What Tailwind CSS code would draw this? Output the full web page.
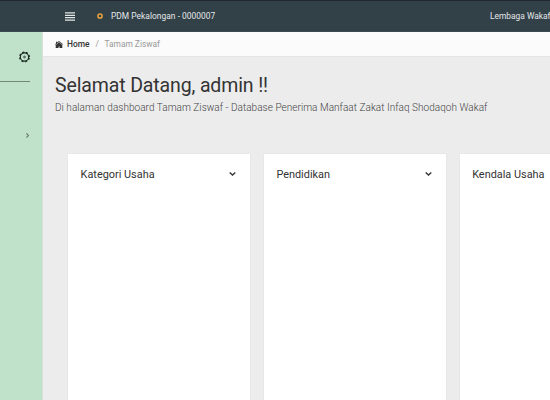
<!DOCTYPE html>
<html lang="id">
<head>
<meta charset="utf-8">
<title>Tamam Ziswaf</title>
<script src="https://cdn.jsdelivr.net/npm/@tailwindcss/browser@4"></script>
</head>
<body class="w-[550px] h-[400px] overflow-hidden flex flex-col bg-[#ececec] font-['Roboto',sans-serif] text-[#333]">
<header class="h-8 shrink-0 flex items-center bg-[#324148] border-t border-t-[#20272d] border-b border-b-[#3c4b52] text-[#e4e7e8] text-[8.4px] whitespace-nowrap overflow-hidden">
  <svg class="ml-[65px] w-[10px] h-[9px] shrink-0" viewBox="0 0 10 9" fill="none" stroke="#e4e7e8" stroke-width="1.3"><path d="M0 .9h10M0 3.3h10M0 5.7h10M0 8.1h10"/></svg>
  <svg class="ml-[22px] w-[6px] h-[6px] shrink-0" viewBox="0 0 6 6" fill="none" stroke="#e8a33d" stroke-width="1.5"><circle cx="3" cy="3" r="2.1"/></svg>
  <span class="ml-2 w-[379px] shrink-0 tracking-[0.04px]">PDM Pekalongan - 0000007</span>
  <span class="shrink-0">Lembaga Wakaf</span>
</header>
<div class="flex flex-1 min-h-0">
  <aside class="w-[43px] shrink-0 bg-[#c0e1ca] border-r border-[#d9dfda] flex flex-col">
    <svg class="mt-[19px] ml-[19px] w-[11px] h-[12px] shrink-0" viewBox="0.4 0.4 11.2 11.2" fill="none" stroke="#18251d"><circle cx="6" cy="6" r="4.2" stroke-width="1.1"/><circle cx="6" cy="6" r="5" stroke-width="1.1" stroke-dasharray="2.2 1.727" stroke-dashoffset="-.86"/><circle cx="6" cy="6" r=".9" stroke-width=".8"/></svg>
    <div class="mt-[18px] w-[30px] h-px bg-[#718878] shrink-0"></div>
    <svg class="mt-[51px] ml-[26px] w-[3px] h-[5px] shrink-0" viewBox="0 0 3 5" fill="none" stroke="#66796d" stroke-width="1.1"><path d="M.4.4 2.5 2.5.4 4.6"/></svg>
  </aside>
  <main class="flex-1 min-w-0 flex flex-col whitespace-nowrap">
    <nav class="h-[25px] shrink-0 bg-[#fbfbfb] border-b border-[#e5e5e5] flex items-center pl-3 text-[8.4px] text-[#999]">
      <svg class="w-[8px] h-[7px]" viewBox="0 0 8 7" fill="#333"><path d="M4 0 8 3.2 7.5 3.8 4 1.1.5 3.8 0 3.2 1 2.4V.7h1v.9ZM4 1.5l3.3 2.6V7H4.5V5.5H3.5V7H.7V4.1Z"/></svg>
      <span class="ml-1 text-[#333] font-medium">Home</span>
      <span class="mx-[6px]">/</span>
      <span class="-ml-[0.5px]">Tamam Ziswaf</span>
    </nav>
    <h1 class="mt-[16px] ml-3 text-[19.5px] tracking-[-0.13px] leading-[25px]">Selamat Datang, admin !!</h1>
    <p class="ml-3 mt-[3px] text-[10px] leading-[14px] tracking-[0.04px] font-light text-[#444]">Di halaman dashboard Tamam Ziswaf - Database Penerima Manfaat Zakat Infaq Shodaqoh Wakaf</p>
    <div class="mt-[38.5px] ml-[25px] flex flex-1 gap-[13.4px]">
      <section class="w-[182.4px] shrink-0 bg-white shadow-[0_0_1px_#ccc] pl-[12.6px] pr-[13px] pt-[14.5px]">
        <div class="flex items-center justify-between h-[14px]"><h2 class="text-[10.9px]">Kategori Usaha</h2><svg class="w-[7px] h-[4px] mr-[1px] -mt-[2px]" viewBox="0 0 7 4" fill="none" stroke="#333" stroke-width="1.3"><path d="M.7.5 3.5 3.1 6.3.5"/></svg></div>
      </section>
      <section class="w-[182.4px] shrink-0 bg-white shadow-[0_0_1px_#ccc] pl-[12.6px] pr-[13px] pt-[14.5px]">
        <div class="flex items-center justify-between h-[14px]"><h2 class="text-[10.9px]">Pendidikan</h2><svg class="w-[7px] h-[4px] mr-[1px] -mt-[2px]" viewBox="0 0 7 4" fill="none" stroke="#333" stroke-width="1.3"><path d="M.7.5 3.5 3.1 6.3.5"/></svg></div>
      </section>
      <section class="flex-1 min-w-0 bg-white shadow-[0_0_1px_#ccc] pl-[12.6px] pt-[14.5px]">
        <div class="flex items-center h-[14px]"><h2 class="text-[10.9px]">Kendala Usaha</h2></div>
      </section>
    </div>
  </main>
</div>
</body>
</html>
